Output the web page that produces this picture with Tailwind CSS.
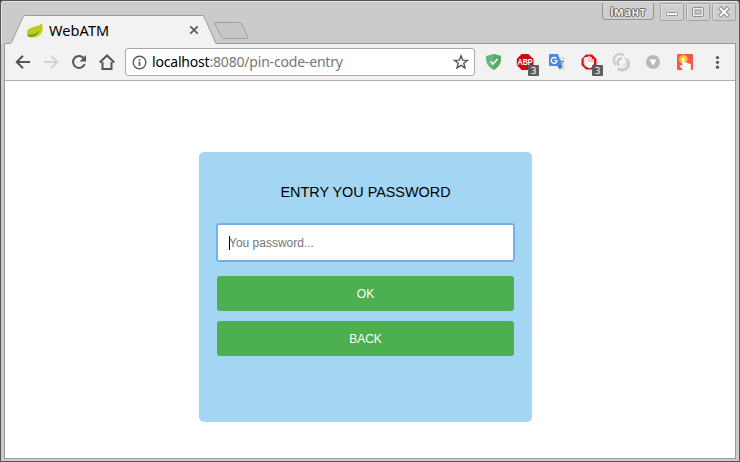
<!DOCTYPE html>
<html lang="en">
<head>
<meta charset="utf-8">
<title>WebATM</title>
<script src="https://cdn.jsdelivr.net/npm/@tailwindcss/browser@4"></script>
</head>
<body class="w-[740px] h-[462px] overflow-hidden bg-[#454347] font-['Noto_Sans',sans-serif]">
<div class="w-[740px] h-[462px] border border-[#555355] rounded-t-[4px] bg-[#cbcbcb] flex flex-col overflow-hidden">
  <!-- Title bar and tabs -->
  <header class="h-[43px] shrink-0 border-t border-l border-[#e4e4e4] flex items-start pl-[3px]">
    <div class="relative w-[212px] h-[42px] shrink-0">
      <svg class="absolute left-0 top-0" width="731" height="42" viewBox="5 2 731 42" fill="none">
        <path d="M5 44L11 43L23 17Q24 15.500 25.500 15.500H202Q203.500 15.500 204.200 17L216 43.500V44Z" fill="#f2f2f2"/>
        <path d="M5 43.500H10L11.500 42.500L23 17Q24 15.500 25.500 15.500H202Q203.500 15.500 204.200 17L216 43.500H736" stroke="#999"/>
      </svg>
      <div class="relative flex items-center h-[28px] mt-[14px] pl-[21px]">
        <svg width="18" height="17" viewBox="0 0 18 17">
          <path d="M16 1C17.500 7 17 15 8 15.500C4 16 1 14 1 10.500C1 4 12 6 16 1Z" fill="#bccd22"/>
          <path d="M16 3C16.500 8 15 11 11 12C7 13 4 12.500 1.500 13L3 15C6 16 16 16 16.500 7Z" fill="#d5dc30"/>
          <path d="M1.300 12.500C6 13.500 11 12 13.500 8.500C12 14 6 15.500 2 14.500Z" fill="#579a35"/>
        </svg>
        <span class="ml-[5px] w-[61px] text-[14.5px] leading-[20px] tracking-[0.1px] text-black whitespace-nowrap">WebATM</span>
        <svg class="ml-[79px]" width="10" height="10" viewBox="0 0 10 10" stroke="#5a5a5a" stroke-width="1.700"><path d="M1.300 1.300L8.700 8.700M8.700 1.300L1.300 8.700"/></svg>
      </div>
    </div>
    <svg class="mt-[19px] -ml-[5px] shrink-0" width="38" height="20" viewBox="212 21 38 20" fill="none"><path d="M216 22.500H239.500Q241 22.500 241.700 24L247.500 36.500Q248.200 38.500 246.500 38.500H224Q222.500 38.500 221.600 37L214.700 24Q214 22.500 216 22.500Z" fill="#c6c6c6" stroke="#a0a0a0"/></svg>
    <div class="ml-auto flex items-start pr-[3px]">
      <div class="w-[52px] h-[17px] mt-px mr-[6px] border border-t-0 border-[#949494] rounded-b-[4px] bg-[#d0d0d0] text-center text-[12px] leading-[18px] font-semibold tracking-[0.4px] text-[#f4f4f4] [text-shadow:-1px_0_#666,1px_0_#666,0_1px_#666,0_-1px_#666]">Імант</div>
      <svg class="mt-[1px]" width="76" height="19" viewBox="0 0 76 19" fill="none">
        <g fill="#cfcfcf" stroke="#a3a3a3"><rect x=".5" y=".5" width="23" height="17" rx="1"/><rect x="26.500" y=".5" width="23" height="17" rx="1"/><rect x="52.500" y=".5" width="23" height="17" rx="1"/></g>
        <path stroke="#e2e2e2" d="M1.500 16.500V1.500H22.500M27.500 16.500V1.500H48.500M53.500 16.500V1.500H74.500"/>
        <rect x="6.500" y="9.500" width="11" height="3" rx="1" fill="#fff" stroke="#929292"/>
        <rect x="32.500" y="4.500" width="11" height="9" rx="1.500" fill="#eee" stroke="#929292"/><rect x="35" y="7" width="6" height="4" fill="#ccc" stroke="#929292"/>
        <path d="M59.500 4.500L68.500 13.500M68.500 4.500L59.500 13.500" stroke="#888" stroke-width="4"/><path d="M60 5L68 13M68 5L60 13" stroke="#fff" stroke-width="2"/>
      </svg>
    </div>
  </header>

  <div class="mx-[3px] h-[415px] bg-[#f2f2f2] flex flex-col border-x border-[#999]">
    <!-- Toolbar -->
    <nav class="h-[37px] shrink-0 border-b border-[#b0b0b0] flex items-center">
      <svg class="shrink-0" width="120" height="36" viewBox="5 44 120 36" fill="none" stroke="#555" stroke-width="2">
        <path d="M30 62H17M23 55.700L16.700 62L23 68.300"/>
        <path d="M44 62H57M51 55.700L57.300 62L51 68.300" stroke="#d2d2d2"/>
        <path d="M84 58.500A6 6 0 1 0 84.700 64"/><path d="M86 55V61.500H79.500Z" fill="#555" stroke="none"/>
        <path d="M102.500 62V69H111.500V62M99.700 62.500L107 55.500L114.300 62.500"/>
      </svg>
      <div class="w-[350px] h-[28px] shrink-0 border border-[#a9a9a9] rounded-[3px] bg-white flex items-center pl-[6px] pr-[5px]">
        <svg width="15" height="15" viewBox="0 0 15 15" fill="none" stroke="#5a5a5a"><circle cx="7.500" cy="7.500" r="6.300" stroke-width="1.400"/><path d="M7.500 6.500V11M7.500 4V5.500" stroke-width="1.700"/></svg>
        <span class="ml-[5px] text-[14px] leading-[20px] tracking-[-0.19px] whitespace-nowrap text-[#777]"><span class="text-black">localhost</span>:8080/pin-code-entry</span>
        <svg class="ml-auto" width="16" height="16" viewBox="0 0 16 16" fill="none" stroke="#555" stroke-width="1.400"><path d="M8 1.800L9.700 6.100L14.400 6.400L10.800 9.300L12 13.900L8 11.400L4 13.900L5.200 9.300L1.600 6.400L6.300 6.100Z"/></svg>
      </div>
      <svg class="shrink-0" width="260" height="36" viewBox="475 44 260 36" fill="none">
        <path d="M493.500 54L501 56C501.500 63 499 67 493.500 70C488 67 485.500 63 486 56Z" fill="#65b878"/><path d="M493.500 54L501 56C501.500 63 499 67 493.500 70Z" fill="#56aa68"/><path d="M490.500 61.500L493 64L497.500 59" stroke="#fff" stroke-width="1.600"/>
        <path d="M521.600 54H528.400L533.500 59V65L528.400 70H521.600L516.800 65V59Z" fill="#c70d10"/>
        <text x="517.600" y="65" font-family="Liberation Sans,sans-serif" font-weight="700" font-size="9" textLength="15" lengthAdjust="spacingAndGlyphs" fill="#fff">ABP</text>
        <path d="M554 57H564.500V70H559Z" fill="#dedede"/><path d="M557 61.500H564M560.500 60V61.500M563 61.500Q561 66 557.500 67M558.500 63Q560 66 563 67" stroke="#768ba0"/>
        <path d="M550 54H558L562 66H550Q549 66 549 65V55Q549 54 550 54Z" fill="#4c86e8"/><path d="M558 66H562L560 69.500Z" fill="#3263c1"/>
        <path d="M556.300 58.500A2.900 2.900 0 1 0 557 60.700H554.500" stroke="#fff" stroke-width="1.300"/>
        <path d="M586 54.500H592L596.500 59V65L592 69.500H586L581.500 65V59Z" fill="#e00d12"/>
        <path d="M585 57H588V67H586L583.700 64V58.500Z" fill="#f3e4e4"/>
        <path d="M587 63V58.500M589 62V56.500M591 62V57.500M593 64V59.500" stroke="#fff" stroke-width="1.500" stroke-linecap="round"/><path d="M585 61.500L588 62H593.700L592.500 66L591 68H588Z" fill="#fff"/>
        <rect x="528" y="65" width="11" height="11" rx="1" fill="#5c5c5c"/><rect x="592" y="65" width="11" height="11" rx="1" fill="#5c5c5c"/>
        <g font-family="DejaVu Sans,sans-serif" font-size="9" fill="#fff"><text x="530.700" y="74">3</text><text x="594.700" y="74">3</text></g>
        <path d="M624 55.500A6 6 0 0 0 616 65" stroke="#cfcfcf" stroke-width="2.500"/><path d="M618 68.500A6 6 0 0 0 626.500 59" stroke="#c9c9c9" stroke-width="3"/><path d="M622 58.500A4 4 0 0 0 619 65.500" stroke="#c4c4c4" stroke-width="2"/><path d="M624 57.500A4.500 4.500 0 0 1 622 66" stroke="#dcdcdc" stroke-width="1.800"/>
        <circle cx="653" cy="62" r="7" fill="#b9b9b9"/><path d="M649.300 59.500H656.700L653 65.500Z" fill="#fff"/>
        <rect x="677" y="54" width="16" height="16" rx="1" fill="#f5574c"/><circle cx="683.300" cy="59.300" r="4.300" fill="#f4c428"/><circle cx="683.300" cy="59" r="2" fill="#f8df5f"/>
        <path d="M682.200 58.500Q683.300 57.300 684.300 58.500V62.500Q685.500 61.500 686.500 63Q687.800 62.200 688.500 63.500Q690.800 63 690.800 65V70H683L679.500 66Q680 64.500 682.200 66Z" fill="#fff"/>
        <g fill="#555"><circle cx="717.500" cy="57.500" r="1.600"/><circle cx="717.500" cy="62.300" r="1.600"/><circle cx="717.500" cy="67.200" r="1.600"/></g>
      </svg>
    </nav>
    <!-- Page -->
    <main class="flex-1 bg-white border-b border-[#999] pt-[71px] font-['Liberation_Sans',Arial,sans-serif]">
      <form class="ml-[194px] w-[333px] h-[270px] rounded-[5px] bg-[#a3d6f3] px-[18px] pt-[31px] flex flex-col">
        <h1 class="text-center text-[14.4px] leading-[18px] text-black">ENTRY YOU PASSWORD</h1>
        <div class="-mx-px mt-[22px] h-[39px] shrink-0 border-2 border-[#78aeed] rounded-[3px] bg-white flex items-center pl-[11px] text-[12px] text-[#757575]"><span class="w-px h-[14px] bg-black -mr-px"></span>You password...</div>
        <button type="button" class="mt-[14px] h-[35px] shrink-0 rounded-[3px] bg-[#4caf50] text-white text-[12px]">OK</button>
        <button type="button" class="mt-[10px] h-[35px] shrink-0 rounded-[3px] bg-[#4caf50] text-white text-[12px]">BACK</button>
      </form>
    </main>
  </div>
</div>
</body>
</html>
